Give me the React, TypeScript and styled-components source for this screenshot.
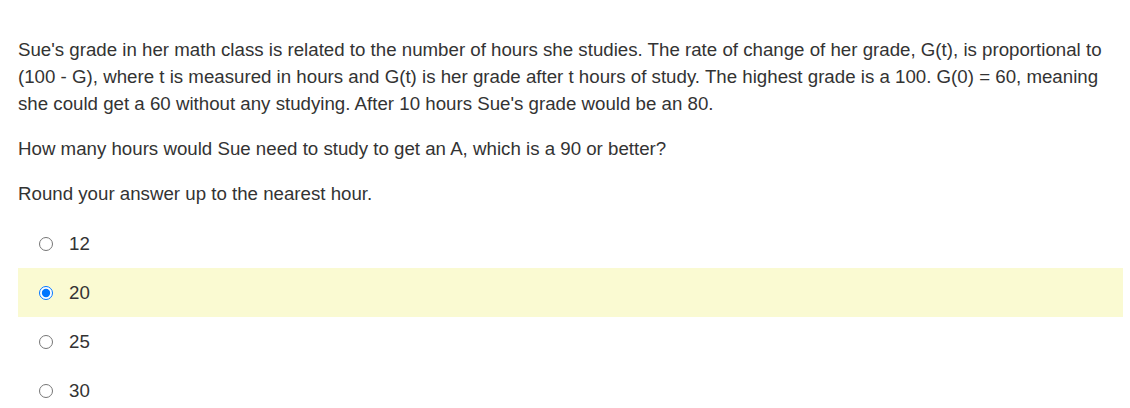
import React from "react"
import styled, { createGlobalStyle } from "styled-components"

const GlobalStyle = createGlobalStyle`
	body {
		margin: 0;
		background: #fff;
		font-family: "Liberation Sans", Arial, sans-serif;
		color: #333;
	}
`

const options = ["12", "20", "25", "30"]
const selected = "20"

export default function App() {
	return (
		<>
			<GlobalStyle />
			<Question>
				<Para>
					Sue's grade in her math class is related to the number of hours she studies. The rate of change of her grade, G(t), is
					proportional to (100 - G), where t is measured in hours and G(t) is her grade after t hours of study. The highest grade is a
					100. G(0) = 60, meaning she could get a 60 without any studying. After 10 hours Sue's grade would be an 80.
				</Para>
				<Para>How many hours would Sue need to study to get an A, which is a 90 or better?</Para>
				<Para>Round your answer up to the nearest hour.</Para>
				<Options>
					{options.map((o) => (
						<Option key={o} active={o === selected}>
							<Radio type="radio" name="answer" checked={o === selected} readOnly />
							<Label>{o}</Label>
						</Option>
					))}
				</Options>
			</Question>
		</>
	)
}

const Question = styled.div`
	width: 1105px;
	padding: 36px 0 0 18px;
`

const Para = styled.p`
	margin: 0 0 18px;
	font-size: 18.7px;
	line-height: 27px;
`

const Options = styled.div`
	display: flex;
	flex-direction: column;
	margin-top: -6px;
`

const Option = styled.label<{ active: boolean }>`
	display: flex;
	align-items: center;
	height: 49px;
	background: ${(p) => (p.active ? "#fafad2" : "transparent")};
	font-size: 18.7px;
`

const Radio = styled.input`
	width: 14px;
	height: 14px;
	margin: 0 0 0 21px;
	accent-color: #0075ff;
`

const Label = styled.span`
	margin-left: 16px;
`
